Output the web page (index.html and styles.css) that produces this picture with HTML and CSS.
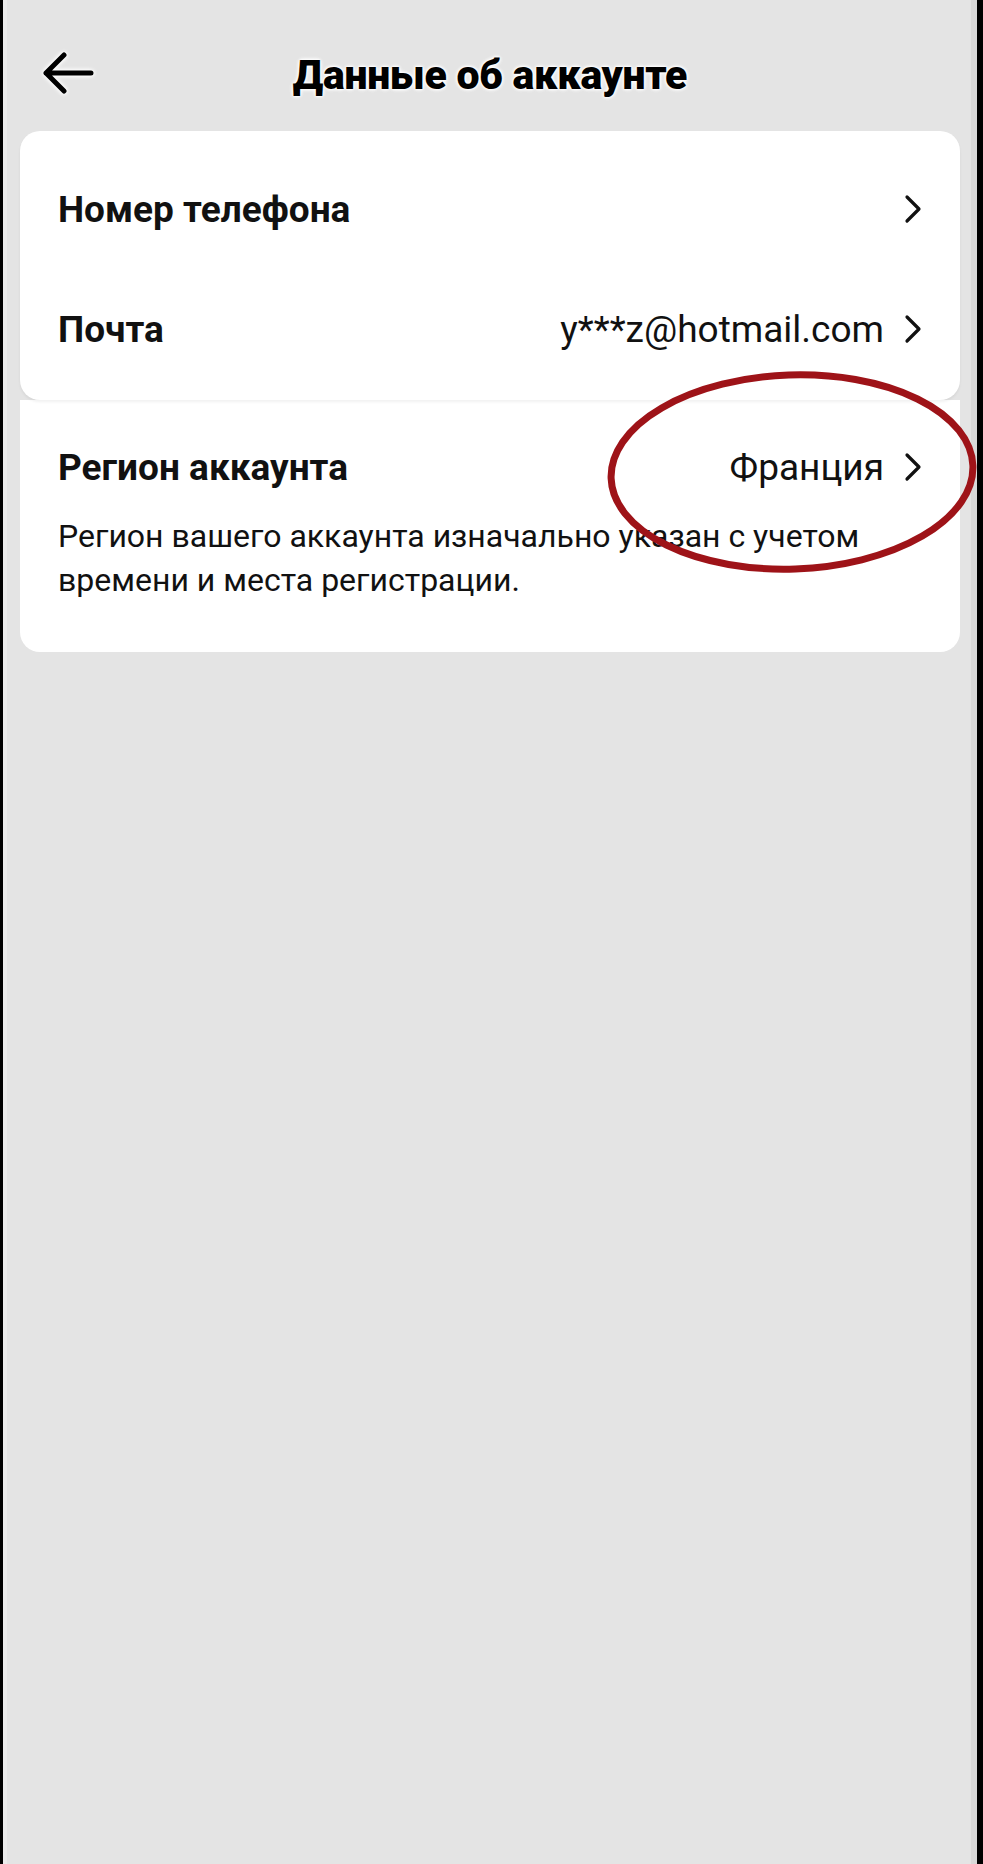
FILE: index.html
```html
<!DOCTYPE html>
<html lang="ru">
<head>
<meta charset="utf-8">
<title>Данные об аккаунте</title>
<link rel="stylesheet" href="styles.css">
</head>
<body>
<div class="screen">
  <header class="topbar">
    <svg class="back" width="54" height="44" viewBox="0 0 54 44" aria-hidden="true">
      <path d="M50 22 H5 M23 4 L5 22 L23 40" fill="none" stroke="#000" stroke-width="5" stroke-linecap="round" stroke-linejoin="round"/>
    </svg>
    <h1 class="title">Данные об аккаунте</h1>
  </header>

  <section class="card card-top">
    <div class="row">
      <span class="label">Номер телефона</span>
      <span class="value"></span>
      <svg class="chev" width="18" height="30" viewBox="0 0 18 30" aria-hidden="true"><polyline points="3,3 15,15 3,27" fill="none" stroke="#111" stroke-width="3.2" stroke-linecap="round" stroke-linejoin="round"/></svg>
    </div>
    <div class="row">
      <span class="label">Почта</span>
      <span class="value">y***z@hotmail.com</span>
      <svg class="chev" width="18" height="30" viewBox="0 0 18 30" aria-hidden="true"><polyline points="3,3 15,15 3,27" fill="none" stroke="#111" stroke-width="3.2" stroke-linecap="round" stroke-linejoin="round"/></svg>
    </div>
  </section>

  <section class="card card-bottom">
    <div class="row row-region">
      <span class="label">Регион аккаунта</span>
      <span class="value">Франция</span>
      <svg class="chev" width="18" height="30" viewBox="0 0 18 30" aria-hidden="true"><polyline points="3,3 15,15 3,27" fill="none" stroke="#111" stroke-width="3.2" stroke-linecap="round" stroke-linejoin="round"/></svg>
    </div>
    <p class="note">Регион вашего аккаунта изначально указан с учетом времени и места регистрации.</p>
  </section>

  <svg class="mark" width="400" height="230" viewBox="0 0 400 230" aria-hidden="true">
    <ellipse cx="200" cy="113" rx="181" ry="97" transform="rotate(-2 200 113)" fill="none" stroke="#9e1318" stroke-width="7"/>
  </svg>
</div>
</body>
</html>
```

FILE: styles.css
```css
html, body {
  margin: 0;
  padding: 0;
}

body {
  background: #000;
  font-family: Roboto, "Noto Sans", "Liberation Sans", sans-serif;
  color: #111;
}

.screen {
  position: relative;
  box-sizing: border-box;
  width: 983px;
  height: 1864px;
  background: #e4e4e4;
  border-left: 3px solid #000;
  border-right: 6px solid #000;
  box-shadow: inset 10px 0 0 -6px #ebebeb, inset -6px 0 0 0 #d9d9d9;
  overflow: hidden;
}

.topbar {
  position: relative;
  height: 131px;
  display: flex;
  align-items: center;
  justify-content: center;
}

.back {
  position: absolute;
  left: 38px;
  top: 51px;
  filter: drop-shadow(0 0 2px #fff) drop-shadow(0 0 1px #fff);
}

.title {
  margin: 18px 0 0 0;
  font-family: Roboto, "Noto Sans", sans-serif;
  font-weight: 900;
  font-size: 41px;
  letter-spacing: -0.3px;
  color: #000;
  text-shadow: 0 0 2px #fff, 0 0 3px #fff, 0 0 4px #fff, 0 0 4px #fff;
}

.card {
  background: #fff;
  margin: 0 17px;
}

.card-top {
  position: relative;
  z-index: 1;
  border-radius: 20px;
  padding: 18px 0 11px;
  box-shadow: 0 2px 3px rgba(0, 0, 0, 0.06);
}

.card-bottom {
  border-radius: 0 0 20px 20px;
  padding: 20px 0 50px;
}

.row {
  display: flex;
  align-items: center;
  height: 120px;
  padding: 0 38px 0 38px;
}

.row-region {
  height: 94px;
}

.label {
  font-weight: 700;
  font-size: 37px;
  color: #111;
  flex: 1;
}

.value {
  font-weight: 400;
  font-size: 37px;
  color: #111;
  margin-right: 20px;
}

.chev {
  flex: none;
}

.note {
  margin: 0;
  padding: 0 38px;
  font-size: 32px;
  line-height: 44px;
  color: #111;
}

.mark {
  position: absolute;
  z-index: 2;
  left: 589px;
  top: 359px;
  pointer-events: none;
}
```
